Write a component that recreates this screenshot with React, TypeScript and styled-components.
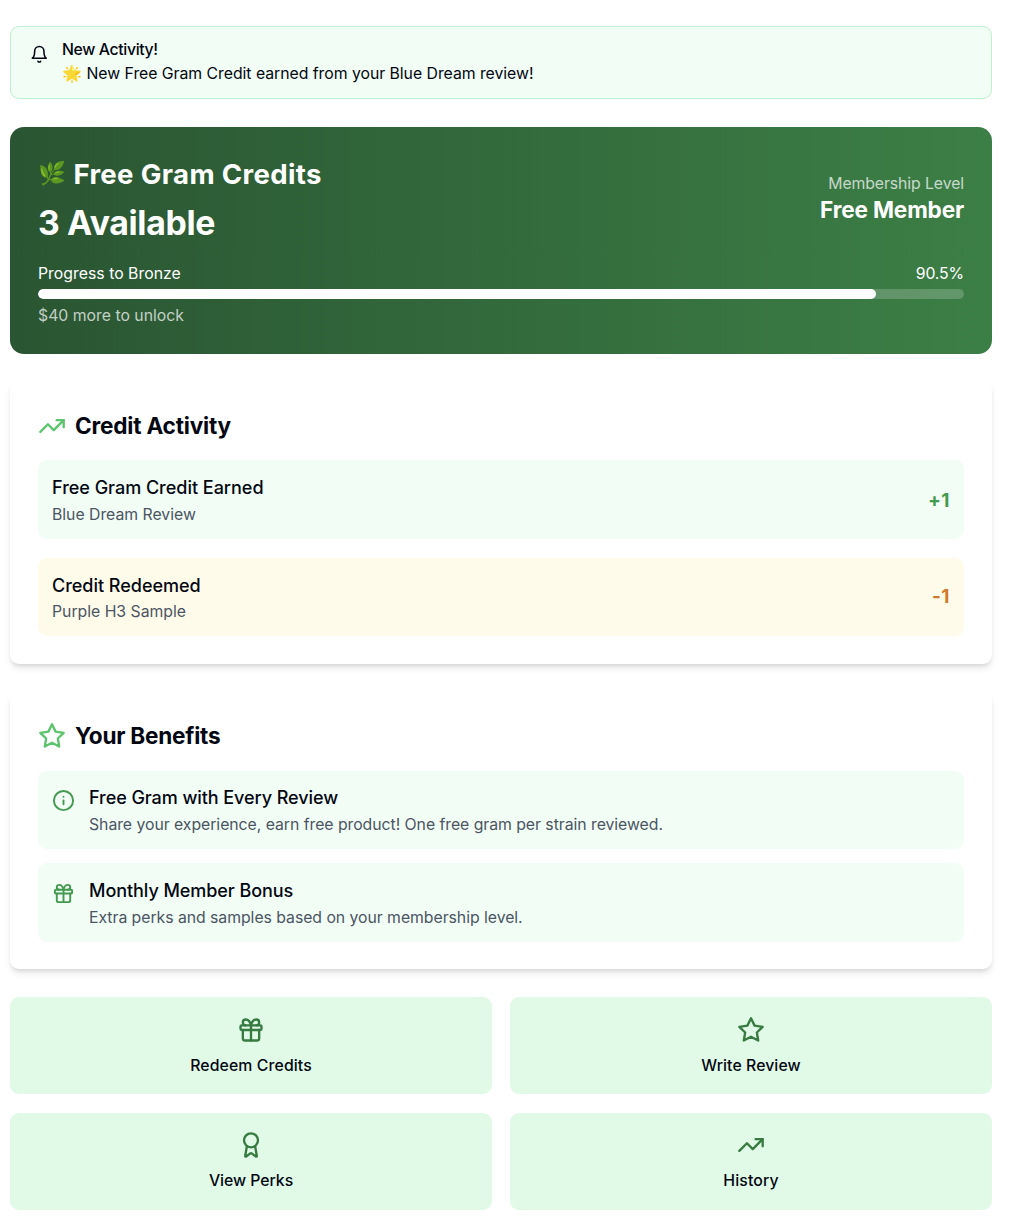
import React from "react";
import styled, { createGlobalStyle } from "styled-components";

const GlobalStyle = createGlobalStyle`
  *, *::before, *::after { box-sizing: border-box; }
  body {
    margin: 0;
    background: #fff;
    color: #030712;
    font-family: Inter, "Liberation Sans", sans-serif;
    font-size: 15.8px;
    line-height: 23.3px;
  }
  h1, h2, h3, p { margin: 0; }
`;

const Page = styled.main`
  display: flex;
  flex-direction: column;
  gap: 28px;
  width: 982px;
  margin: 26px 0 0 10px;
`;

const Text = styled.p<{ $size?: number; $line?: number; $weight?: number; $track?: number; $color?: string }>`
  font-size: ${(p) => p.$size ?? 15.8}px;
  line-height: ${(p) => p.$line ?? 23.3}px;
  font-weight: ${(p) => p.$weight ?? 400};
  letter-spacing: ${(p) => p.$track ?? -0.04}px;
  color: ${(p) => p.$color ?? "inherit"};
  white-space: nowrap;
`;

const Emoji = styled.span<{ $width: number; $size: number; $raise?: number }>`
  display: inline-block;
  width: ${(p) => p.$width}px;
  font-size: ${(p) => p.$size}px;
  letter-spacing: 0;
  line-height: 1;
  vertical-align: ${(p) => p.$raise ?? 0}px;
`;

const Alert = styled.section`
  display: flex;
  gap: 13.4px;
  height: 73px;
  padding: 11px 19px;
  border: 1px solid #bff0cf;
  border-radius: 9px;
  background: #f2fdf5;

  svg { margin-top: 7px; }
`;

const Hero = styled.section`
  height: 227px;
  padding: 28px;
  border-radius: 14px;
  color: #fff;
  background: linear-gradient(to right, #2a5532, #3c7f46);
`;

const HeroTop = styled.div`
  display: flex;
  align-items: center;
  justify-content: space-between;
  margin-bottom: 18px;
`;

const Credits = styled.div`
  display: flex;
  flex-direction: column;
  gap: 9px;
`;

const Membership = styled.div`
  padding-bottom: 3px;
  text-align: right;
`;

const Between = styled.div`
  display: flex;
  justify-content: space-between;
  align-items: center;
`;

const Track = styled.div`
  height: 10px;
  margin: 4px 0 5px;
  border-radius: 5px;
  overflow: hidden;
  background: rgba(255, 255, 255, 0.2);
`;

const Fill = styled.div`
  height: 100%;
  border-radius: 5px;
  background: #fff;
`;

const Card = styled.section<{ $height: number }>`
  height: ${(p) => p.$height}px;
  padding: 28px;
  border-radius: 9px;
  background: #fff;
  box-shadow: 0 4.6px 7px -1px rgba(0, 0, 0, 0.1), 0 2.3px 4.6px -2px rgba(0, 0, 0, 0.1);
`;

const CardHeading = styled.div<{ $space: number }>`
  display: flex;
  align-items: center;
  gap: 9px;
  height: 32px;
  margin-bottom: ${(p) => p.$space}px;
`;

const List = styled.div<{ $gap: number }>`
  display: flex;
  flex-direction: column;
  gap: ${(p) => p.$gap}px;
`;

const Row = styled.div<{ $tone?: "amber"; $top?: boolean; $height: number; $pad?: number }>`
  display: flex;
  align-items: ${(p) => (p.$top ? "flex-start" : "center")};
  justify-content: ${(p) => (p.$top ? "flex-start" : "space-between")};
  gap: 14px;
  height: ${(p) => p.$height}px;
  padding: ${(p) => p.$pad ?? 13}px 14px ${(p) => (p.$top ? 0 : 13)}px;
  border-radius: 9px;
  background: ${(p) => (p.$tone === "amber" ? "#fffbeb" : "#f2fdf5")};

  svg { margin-top: 5px; }
`;

const Actions = styled.div`
  display: grid;
  grid-template-columns: 1fr 1fr;
  gap: 19px 18px;
`;

const Action = styled.button<{ $lower?: boolean }>`
  display: flex;
  flex-direction: column;
  align-items: center;
  gap: 10px;
  height: 97px;
  padding: ${(p) => (p.$lower ? 18 : 19)}px 0 0;
  border: 0;
  border-radius: 9px;
  color: inherit;
  font-family: inherit;
  background: #e1fae7;
`;

const Svg = styled.svg<{ $size: number; $color: string }>`
  display: block;
  flex: none;
  width: ${(p) => p.$size}px;
  height: ${(p) => p.$size}px;
  fill: none;
  stroke: ${(p) => p.$color};
  stroke-width: 2;
  stroke-linecap: round;
  stroke-linejoin: round;
`;

const shapes = {
  bell: (
    <>
      <path d="M6 8a6 6 0 0 1 12 0c0 7 3 9 3 9H3s3-2 3-9" />
      <path d="M10.3 21a1.94 1.94 0 0 0 3.4 0" />
    </>
  ),
  trend: (
    <>
      <polyline points="22 7 13.5 15.5 8.5 10.5 2 17" />
      <polyline points="16 7 22 7 22 13" />
    </>
  ),
  star: <polygon points="12 2 15.09 8.26 22 9.27 17 14.14 18.18 21.02 12 17.77 5.82 21.02 7 14.14 2 9.27 8.91 8.26 12 2" />,
  info: (
    <>
      <circle cx="12" cy="12" r="10" />
      <path d="M12 16v-4" />
      <path d="M12 8h.01" />
    </>
  ),
  gift: (
    <>
      <rect x="3" y="8" width="18" height="4" rx="1" />
      <path d="M12 8v13" />
      <path d="M19 12v7a2 2 0 0 1-2 2H7a2 2 0 0 1-2-2v-7" />
      <path d="M7.5 8a2.5 2.5 0 0 1 0-5A4.8 8 0 0 1 12 8a4.8 8 0 0 1 4.5-5 2.5 2.5 0 0 1 0 5" />
    </>
  ),
  award: (
    <>
      <path d="m15.477 12.89 1.515 8.526a.5.5 0 0 1-.81.47l-3.58-2.687a1 1 0 0 0-1.197 0l-3.586 2.686a.5.5 0 0 1-.81-.469l1.514-8.526" />
      <circle cx="12" cy="8" r="6" />
    </>
  ),
};

type IconName = keyof typeof shapes;

function Icon({ name, size = 28, color }: { name: IconName; size?: number; color: string }) {
  return (
    <Svg viewBox="0 0 24 24" $size={size} $color={color} aria-hidden="true">
      {shapes[name]}
    </Svg>
  );
}

const activity = [
  { title: "Free Gram Credit Earned", detail: "Blue Dream Review", amount: "+1", color: "#459a51", height: 79, pad: 15, line: 25.4, tone: undefined },
  { title: "Credit Redeemed", detail: "Purple H3 Sample", amount: "-1", color: "#cf7a2c", height: 78, pad: 13, line: 24, tone: "amber" as const },
];

const benefits: { icon: IconName; title: string; detail: string; height: number; pad: number }[] = [
  { icon: "info", title: "Free Gram with Every Review", detail: "Share your experience, earn free product! One free gram per strain reviewed.", height: 78, pad: 13 },
  { icon: "gift", title: "Monthly Member Bonus", detail: "Extra perks and samples based on your membership level.", height: 79, pad: 14 },
];

const actions: { icon: IconName; label: string; track: number; lower?: boolean }[] = [
  { icon: "gift", label: "Redeem Credits", track: 0.12 },
  { icon: "star", label: "Write Review", track: 0.08 },
  { icon: "award", label: "View Perks", track: -0.03, lower: true },
  { icon: "trend", label: "History", track: 0.15, lower: true },
];

export default function App() {
  const progress = 90.5;

  return (
    <>
      <GlobalStyle />
      <Page>
        <Alert>
          <Icon name="bell" size={18.6} color="#030712" />
          <div>
            <Text as="h3" $weight={500} $track={-0.36}>New Activity!</Text>
            <Text $line={25.4} $track={-0.03}>
              <Emoji $width={24.5} $size={16}>🌟</Emoji>
              New Free Gram Credit earned from your Blue Dream review!
            </Text>
          </div>
        </Alert>

        <Hero>
          <HeroTop>
            <Credits>
              <Text as="h1" $size={27.6} $line={38} $weight={700} $track={0.35}>
                <Emoji $width={35.4} $size={22.5} $raise={3}>🌿</Emoji>
                Free Gram Credits
              </Text>
              <Text $size={33.8} $line={42} $weight={700} $track={-0.35}>3 Available</Text>
            </Credits>
            <Membership>
              <Text $line={24} $color="rgba(255,255,255,0.72)" $track={-0.09}>Membership Level</Text>
              <Text $size={22.6} $line={28} $weight={700} $track={-0.17}>Free Member</Text>
            </Membership>
          </HeroTop>
          <Between>
            <Text $track={0.02}>Progress to Bronze</Text>
            <Text $track={-0.1}>90.5%</Text>
          </Between>
          <Track>
            <Fill style={{ width: `${progress}%` }} />
          </Track>
          <Text $color="rgba(255,255,255,0.72)" $track={0}>$40 more to unlock</Text>
        </Hero>

        <Card $height={282}>
          <CardHeading $space={18}>
            <Icon name="trend" color="#5bc46c" />
            <Text as="h2" $size={22.6} $line={32} $weight={700} $track={-0.2}>Credit Activity</Text>
          </CardHeading>
          <List $gap={19}>
            {activity.map((a) => (
              <Row key={a.title} $tone={a.tone} $height={a.height} $pad={a.pad}>
                <div>
                  <Text as="h3" $size={18.05} $line={29} $weight={500} $track={-0.03}>{a.title}</Text>
                  <Text $line={a.line} $color="#4b5563" $track={-0.02}>{a.detail}</Text>
                </div>
                <Text $size={19} $line={28} $weight={700} $track={0.5} $color={a.color}>{a.amount}</Text>
              </Row>
            ))}
          </List>
        </Card>

        <Card $height={277}>
          <CardHeading $space={19}>
            <Icon name="star" color="#5bc46c" />
            <Text as="h2" $size={22.6} $line={32} $weight={700} $track={-0.24}>Your Benefits</Text>
          </CardHeading>
          <List $gap={14}>
            {benefits.map((b) => (
              <Row key={b.title} $top $height={b.height} $pad={b.pad}>
                <Icon name={b.icon} size={23} color="#459a51" />
                <div>
                  <Text as="h3" $size={18.05} $line={28} $weight={500} $track={-0.08}>{b.title}</Text>
                  <Text $line={25.4} $color="#4b5563">{b.detail}</Text>
                </div>
              </Row>
            ))}
          </List>
        </Card>

        <Actions>
          {actions.map((a) => (
            <Action key={a.label} type="button" $lower={a.lower}>
              <Icon name={a.icon} color="#377a42" />
              <Text as="span" $weight={500} $track={a.track}>{a.label}</Text>
            </Action>
          ))}
        </Actions>
      </Page>
    </>
  );
}
